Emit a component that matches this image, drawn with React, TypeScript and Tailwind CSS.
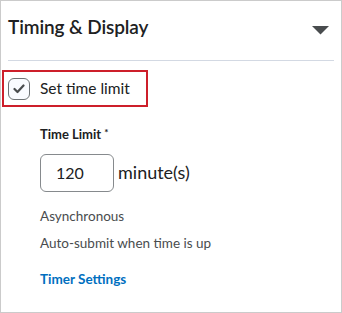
import React from 'react';

function App() {
  return (
    <div className="w-[342px] h-[313px] bg-white border border-[#cbcbcb] font-['Lato',sans-serif] text-[#202122] overflow-hidden">
      <div className="flex items-center justify-between pl-[7px] pr-[12px] pt-[10px] h-[43px]">
        <h2 className="text-[19px] font-semibold tracking-[-0.1px] text-[#202122]">Timing &amp; Display</h2>
        <svg width="17" height="9" viewBox="0 0 17 9" className="mt-[6px]">
          <path d="M0 0 H17 L8.5 8.5 Z" fill="#494c4e" />
        </svg>
      </div>
      <div className="mx-[7px] mt-[16px] border-t border-[#d3d9e3]" />

      <div className="mt-[9px] ml-[1px] w-[146px] h-[37px] border-2 border-[#cd1f2a] flex items-center pl-[4px]">
        <span className="w-[22px] h-[22px] rounded-[6px] border border-[#6e7376] bg-[#f9fbff] flex items-center justify-center">
          <svg width="12" height="10" viewBox="0 0 12 10">
            <path d="M1.5 5 L4.5 8 L10.5 1.5" stroke="#494c4e" strokeWidth="2.2" fill="none" strokeLinecap="round" strokeLinejoin="round" />
          </svg>
        </span>
        <span className="ml-[10px] text-[15.5px] text-[#202122]">Set time limit</span>
      </div>

      <div className="pl-[39px]">
        <div className="mt-[18px] text-[13px] font-bold text-[#202122]">
          Time Limit <span className="text-[10px] align-top">*</span>
        </div>
        <div className="mt-[9px] flex items-center">
          <div className="w-[74px] h-[38px] rounded-[6px] border border-[#868a8d] flex items-center pl-[15px] text-[16px] text-[#202122]">
            120
          </div>
          <span className="ml-[4px] text-[18px] text-[#202122]">minute(s)</span>
        </div>
        <div className="mt-[14px] text-[13.5px] text-[#494c4e]">Asynchronous</div>
        <div className="mt-[7px] text-[13.5px] text-[#494c4e]">Auto-submit when time is up</div>
        <div className="mt-[16px] text-[13.5px] font-bold text-[#006fbf]">Timer Settings</div>
      </div>
    </div>
  );
}

export default App;
